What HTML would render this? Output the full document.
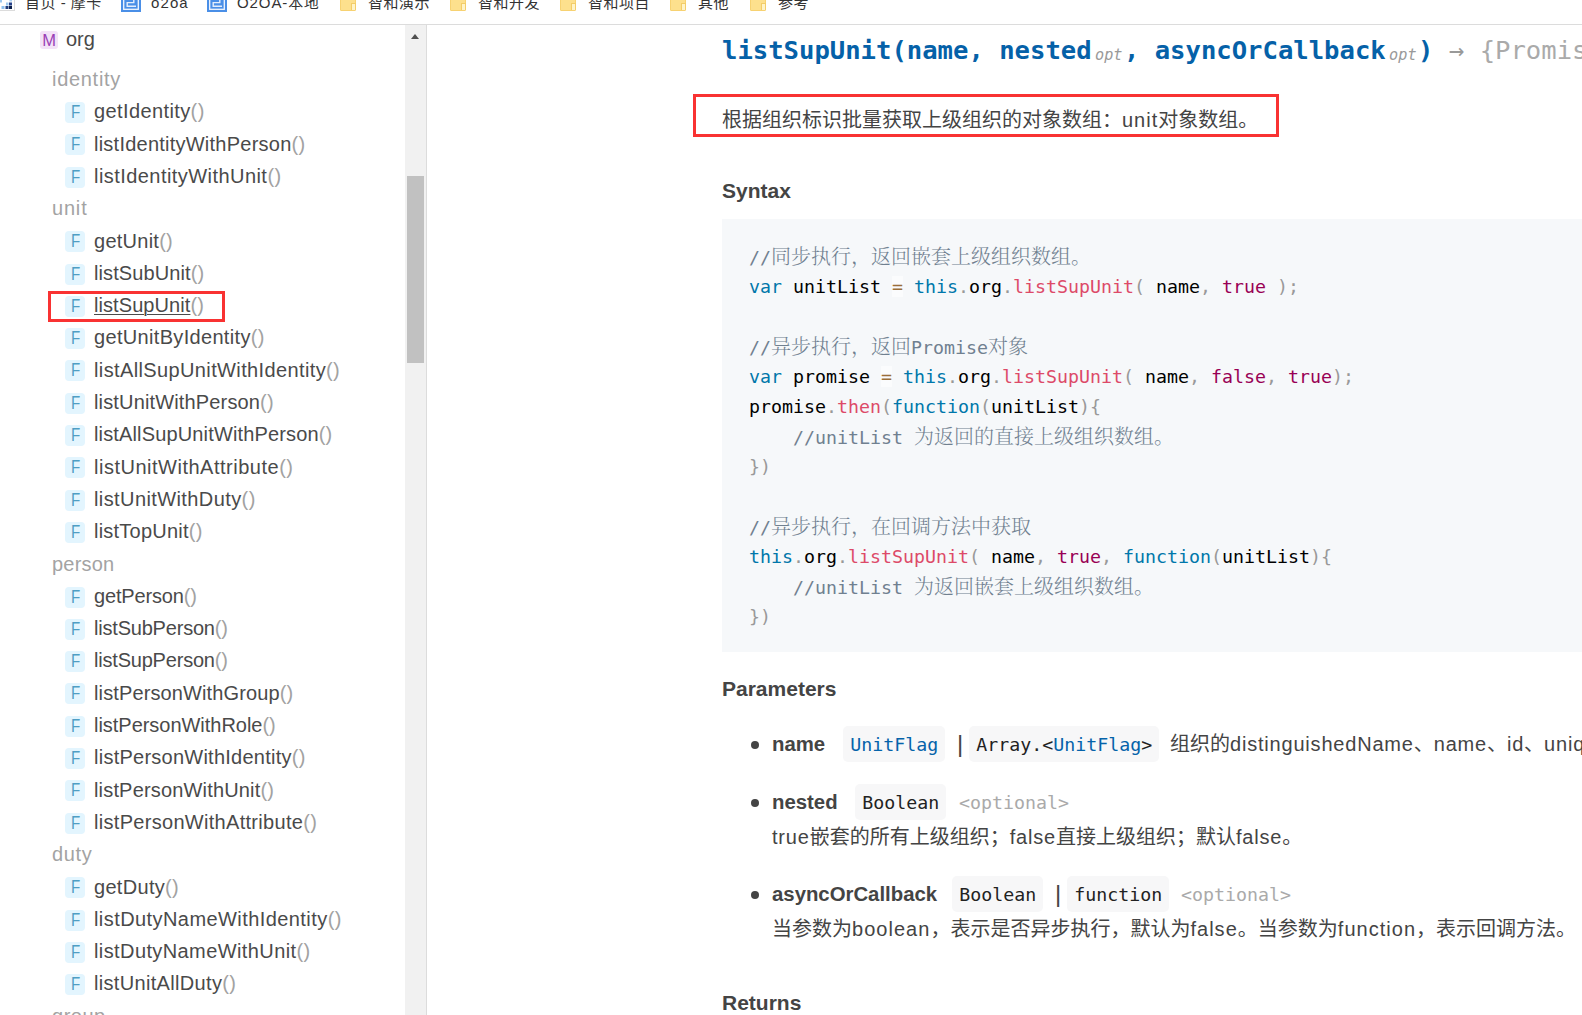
<!DOCTYPE html>
<html lang="zh-CN">
<head>
<meta charset="utf-8">
<title>org - listSupUnit</title>
<style>
*{box-sizing:border-box;margin:0;padding:0}
html,body{width:1582px;height:1015px;overflow:hidden;background:#fff}
body{position:relative;font-family:"Liberation Sans","Noto Sans CJK SC",sans-serif;font-size:20px;color:#444}
.abs{position:absolute;white-space:nowrap}
#bar{position:absolute;left:0;top:0;width:1582px;height:25px;background:#fff;border-bottom:1px solid #dcdcdc;overflow:hidden;z-index:5}
#bar .bt{position:absolute;top:-7px;letter-spacing:.5px;height:20px;line-height:20px;font-size:15px;color:#333;white-space:nowrap}
#bar .fold{position:absolute;top:-6px;width:16px;height:17px;background:#fde08d;border:1px solid #f7d272;border-radius:1px}
#bar .fold:after{content:'';position:absolute;right:-1px;bottom:0;width:3px;height:6px;background:#fff3c7;border:1px solid #f3cd69;border-bottom:none}
#bar .o2{position:absolute;top:-8px;width:20px;height:20px}
#bar .fav{position:absolute;left:0;top:-5px;width:15px;height:16px}
#side{position:absolute;left:0;top:0;width:405px;height:1015px;overflow:hidden;background:#fff}
#track{position:absolute;left:405px;top:25px;width:21px;height:990px;background:#f1f1f1}
#sline{position:absolute;left:426px;top:25px;width:1px;height:990px;background:#dcdcdc}
#thumb{position:absolute;left:407px;top:176px;width:17px;height:187px;background:#c1c1c1}
#arrow{position:absolute;left:410.6px;top:33.8px;width:0;height:0;border-left:4.8px solid transparent;border-right:4.8px solid transparent;border-bottom:5.2px solid #505050}
.row{position:absolute;left:0;height:32px;line-height:32px;white-space:nowrap;font-size:20px;color:#4a4a4a}
.row .nm{position:absolute;left:94px;top:0}
.row .pr{color:#a2a2a2}
.grp{position:absolute;left:52px;height:32px;line-height:32px;font-size:20px;color:#a3a3a3;white-space:nowrap}
.fb{position:absolute;left:65px;top:6.8px;width:20px;height:21px;border-radius:4px;background:#e3f5fe;color:#4f9ec4;font-size:18px;line-height:21px;text-align:center}
.fb b{display:inline-block;font-weight:normal;transform:scaleX(.84)}
.mb{position:absolute;left:40px;top:31px;width:18px;height:18px;border-radius:3px;background:#f3e2f7;color:#9a3fb5;font-size:16.5px;line-height:18px;text-align:center}
#selbox{position:absolute;left:48px;top:291px;width:177px;height:31px;border:3px solid #f93232}
#main{position:absolute;left:427px;top:0;width:1155px;height:1015px;overflow:hidden}
#main .abs{position:absolute;white-space:nowrap}
.mono{font-family:"DejaVu Sans Mono","Noto Serif CJK SC",monospace}
#h4{left:295px;top:33px;height:34px;line-height:34px;font-size:25.58px;font-weight:bold;color:#0561a8}
#h4 .opt{font-size:15.2px;font-style:italic;font-weight:normal;color:#999;margin:0 1.5px 0 3.4px;position:relative;top:1px}
#h4 .ret{font-weight:normal;color:#aaa}
#h4 .arr{font-weight:normal;color:#999}
#descbox{left:266px;top:94px;width:586px;height:43px;border:3px solid #f93232}
#desc{left:295px;top:102.5px;height:34px;line-height:34px;font-size:20px;color:#444}
.hd{font-weight:bold;font-size:21px;color:#444;left:295px;height:30px;line-height:30px}
#code{left:295px;top:219px;width:860px;height:433px;background:#f6f8fa}
#code .ln{position:absolute;left:27px;margin-top:0.9px;height:30px;font-family:"DejaVu Sans Mono","Noto Serif CJK SC",monospace;font-size:18.27px;line-height:30px;color:#000;white-space:pre}
#code .ln .cj{font-size:20px;line-height:30px;font-weight:300}
.c{color:#708090}.k{color:#0077aa}.f{color:#dd4a68}.b{color:#990055}.p{color:#999}.o{color:#9a6e3a;background:rgba(255,255,255,.5)}
.bul{width:8px;height:8px;border-radius:50%;background:#444;left:324.4px}
.pn{font-weight:bold;font-size:20.35px;color:#444;left:345px;height:36px;line-height:36px}
.ty{height:36px;line-height:38px;border-radius:5px;background:#f7f7f8;font-family:"DejaVu Sans Mono",monospace;font-size:18.27px;color:#222;padding:0 7.2px}
.ty .lk{color:#0563aa}
.bar{font-size:24px;color:#444;height:36px;line-height:35px}
.optn{font-family:"DejaVu Sans Mono",monospace;font-size:18.27px;color:#aaa;height:36px;line-height:38px}
.pd{left:345px;font-size:20px;color:#444;height:34px;line-height:34px}
.la{letter-spacing:.8px}

</style>
</head>
<body>
<div id="bar">
<svg class="fav" viewBox="0 0 15 16"><rect x="-1" y="-1" width="15.5" height="16.5" fill="#fff" stroke="#dcdcdc"/><rect x="1.5" y="11" width="3" height="3" fill="#8fc0ee"/><rect x="5.5" y="11" width="3" height="3" fill="#1f3b7a"/><rect x="9" y="11" width="3" height="3" fill="#0b1f4a"/><rect x="9" y="7.5" width="3" height="3" fill="#27428a"/><rect x="6" y="7.5" width="2.5" height="3" fill="#9cc8f0"/><rect x="0" y="5" width="2" height="2.5" fill="#9cc8f0"/><rect x="9.5" y="4" width="2.5" height="2.5" fill="#a9d0f3"/></svg>
<span class="bt" style="left:25px">首页 - 摩卡</span>
<svg class="o2" style="left:121px" viewBox="0 0 20 20"><rect width="20" height="20" fill="#4a8fe7"/><rect x="2.7" y="2.7" width="14.6" height="14.6" fill="none" stroke="#f1f6fe" stroke-width="1.3"/><path d="M8.5 7H12.8V10.6H6.2V14.2H15" fill="none" stroke="#e4eefc" stroke-width="1.4"/></svg>
<span class="bt" style="left:151px"><span style="letter-spacing:1.1px">o2oa</span></span>
<svg class="o2" style="left:207px" viewBox="0 0 20 20"><rect width="20" height="20" fill="#4a8fe7"/><rect x="2.7" y="2.7" width="14.6" height="14.6" fill="none" stroke="#f1f6fe" stroke-width="1.3"/><path d="M8.5 7H12.8V10.6H6.2V14.2H15" fill="none" stroke="#e4eefc" stroke-width="1.4"/></svg>
<span class="bt" style="left:237px"><span style="letter-spacing:0.9px">O2OA-</span>本地</span>
<span class="fold" style="left:340px"></span>
<span class="bt" style="left:368px">智和演示</span>
<span class="fold" style="left:450px"></span>
<span class="bt" style="left:478px">智和开发</span>
<span class="fold" style="left:560px"></span>
<span class="bt" style="left:588px">智和项目</span>
<span class="fold" style="left:670px"></span>
<span class="bt" style="left:698px">其他</span>
<span class="fold" style="left:750px"></span>
<span class="bt" style="left:778px">参考</span>
</div>
<div id="side">
<div class="mb">M</div><div class="row" style="left:66px;top:23.4px">org</div>
<div class="grp" id="r_identity" style="top:63.0px;letter-spacing:0.703px;">identity</div>
<div class="row" style="top:95.3px"><span class="fb"><b>F</b></span><span class="nm" id="r_getIdentity" style="letter-spacing:0.391px;"><span>getIdentity</span><span class="pr">()</span></span></div>
<div class="row" style="top:127.6px"><span class="fb"><b>F</b></span><span class="nm" id="r_listIdentityWithPerson" style="letter-spacing:0.236px;"><span>listIdentityWithPerson</span><span class="pr">()</span></span></div>
<div class="row" style="top:159.9px"><span class="fb"><b>F</b></span><span class="nm" id="r_listIdentityWithUnit" style="letter-spacing:0.444px;"><span>listIdentityWithUnit</span><span class="pr">()</span></span></div>
<div class="grp" id="r_unit" style="top:192.2px;letter-spacing:0.812px;">unit</div>
<div class="row" style="top:224.5px"><span class="fb"><b>F</b></span><span class="nm" id="r_getUnit" style="letter-spacing:0.255px;"><span>getUnit</span><span class="pr">()</span></span></div>
<div class="row" style="top:256.8px"><span class="fb"><b>F</b></span><span class="nm" id="r_listSubUnit" style="letter-spacing:0.098px;"><span>listSubUnit</span><span class="pr">()</span></span></div>
<div class="row" style="top:289.1px"><span class="fb"><b>F</b></span><span class="nm" id="r_listSupUnit" style="letter-spacing:0.075px;"><span style="text-decoration:underline;text-decoration-thickness:1px;text-underline-offset:2px">listSupUnit</span><span class="pr">()</span></span></div>
<div class="row" style="top:321.4px"><span class="fb"><b>F</b></span><span class="nm" id="r_getUnitByIdentity" style="letter-spacing:0.325px;"><span>getUnitByIdentity</span><span class="pr">()</span></span></div>
<div class="row" style="top:353.7px"><span class="fb"><b>F</b></span><span class="nm" id="r_listAllSupUnitWithIdentity" style="letter-spacing:0.374px;"><span>listAllSupUnitWithIdentity</span><span class="pr">()</span></span></div>
<div class="row" style="top:386.0px"><span class="fb"><b>F</b></span><span class="nm" id="r_listUnitWithPerson" style="letter-spacing:0.15px;"><span>listUnitWithPerson</span><span class="pr">()</span></span></div>
<div class="row" style="top:418.3px"><span class="fb"><b>F</b></span><span class="nm" id="r_listAllSupUnitWithPerson" style="letter-spacing:0.149px;"><span>listAllSupUnitWithPerson</span><span class="pr">()</span></span></div>
<div class="row" style="top:450.6px"><span class="fb"><b>F</b></span><span class="nm" id="r_listUnitWithAttribute" style="letter-spacing:0.508px;"><span>listUnitWithAttribute</span><span class="pr">()</span></span></div>
<div class="row" style="top:482.9px"><span class="fb"><b>F</b></span><span class="nm" id="r_listUnitWithDuty" style="letter-spacing:0.402px;"><span>listUnitWithDuty</span><span class="pr">()</span></span></div>
<div class="row" style="top:515.2px"><span class="fb"><b>F</b></span><span class="nm" id="r_listTopUnit" style="letter-spacing:0.231px;"><span>listTopUnit</span><span class="pr">()</span></span></div>
<div class="grp" id="r_person" style="top:547.5px;letter-spacing:0.206px;">person</div>
<div class="row" style="top:579.8px"><span class="fb"><b>F</b></span><span class="nm" id="r_getPerson" style="letter-spacing:-0.155px;"><span>getPerson</span><span class="pr">()</span></span></div>
<div class="row" style="top:612.1px"><span class="fb"><b>F</b></span><span class="nm" id="r_listSubPerson" style="letter-spacing:-0.202px;"><span>listSubPerson</span><span class="pr">()</span></span></div>
<div class="row" style="top:644.4px"><span class="fb"><b>F</b></span><span class="nm" id="r_listSupPerson" style="letter-spacing:-0.202px;"><span>listSupPerson</span><span class="pr">()</span></span></div>
<div class="row" style="top:676.7px"><span class="fb"><b>F</b></span><span class="nm" id="r_listPersonWithGroup" style="letter-spacing:0.122px;"><span>listPersonWithGroup</span><span class="pr">()</span></span></div>
<div class="row" style="top:709.0px"><span class="fb"><b>F</b></span><span class="nm" id="r_listPersonWithRole" style="letter-spacing:-0.029px;"><span>listPersonWithRole</span><span class="pr">()</span></span></div>
<div class="row" style="top:741.3px"><span class="fb"><b>F</b></span><span class="nm" id="r_listPersonWithIdentity" style="letter-spacing:0.249px;"><span>listPersonWithIdentity</span><span class="pr">()</span></span></div>
<div class="row" style="top:773.6px"><span class="fb"><b>F</b></span><span class="nm" id="r_listPersonWithUnit" style="letter-spacing:0.169px;"><span>listPersonWithUnit</span><span class="pr">()</span></span></div>
<div class="row" style="top:805.9px"><span class="fb"><b>F</b></span><span class="nm" id="r_listPersonWithAttribute" style="letter-spacing:0.299px;"><span>listPersonWithAttribute</span><span class="pr">()</span></span></div>
<div class="grp" id="r_duty" style="top:838.2px;letter-spacing:0.672px;">duty</div>
<div class="row" style="top:870.5px"><span class="fb"><b>F</b></span><span class="nm" id="r_getDuty" style="letter-spacing:0.304px;"><span>getDuty</span><span class="pr">()</span></span></div>
<div class="row" style="top:902.8px"><span class="fb"><b>F</b></span><span class="nm" id="r_listDutyNameWithIdentity" style="letter-spacing:0.426px;"><span>listDutyNameWithIdentity</span><span class="pr">()</span></span></div>
<div class="row" style="top:935.1px"><span class="fb"><b>F</b></span><span class="nm" id="r_listDutyNameWithUnit" style="letter-spacing:0.399px;"><span>listDutyNameWithUnit</span><span class="pr">()</span></span></div>
<div class="row" style="top:967.4px"><span class="fb"><b>F</b></span><span class="nm" id="r_listUnitAllDuty" style="letter-spacing:0.324px;"><span>listUnitAllDuty</span><span class="pr">()</span></span></div>
<div class="grp" id="r_group" style="top:999.7px;letter-spacing:0.508px;">group</div>
<div id="selbox"></div>
</div>
<div id="track"></div><div id="sline"></div><div id="thumb"></div><div id="arrow"></div>
<div id="main">
<div class="abs mono" id="h4">listSupUnit(name, nested<span class="opt">opt</span>, asyncOrCallback<span class="opt">opt</span>)<span class="arr"> → </span><span class="ret">{Promise|Array}</span></div>
<div class="abs" id="descbox"></div>
<div class="abs" id="desc">根据组织标识批量获取上级组织的对象数组：<span class="la" style="letter-spacing:1px">unit</span>对象数组。</div>
<div class="abs hd" style="top:176px">Syntax</div>
<div class="abs" id="code">
<div class="ln" style="top:22px"><span class="c">//<span class="cj">同步执行，返回嵌套上级组织数组。</span></span></div>
<div class="ln" style="top:52px"><span class="k">var</span> unitList <span class="o">=</span> <span class="k">this</span><span class="p">.</span>org<span class="p">.</span><span class="f">listSupUnit</span><span class="p">(</span> name<span class="p">,</span> <span class="b">true</span> <span class="p">);</span></div>
<div class="ln" style="top:82px"></div>
<div class="ln" style="top:112px"><span class="c">//<span class="cj">异步执行，返回</span>Promise<span class="cj">对象</span></span></div>
<div class="ln" style="top:142px"><span class="k">var</span> promise <span class="o">=</span> <span class="k">this</span><span class="p">.</span>org<span class="p">.</span><span class="f">listSupUnit</span><span class="p">(</span> name<span class="p">,</span> <span class="b">false</span><span class="p">,</span> <span class="b">true</span><span class="p">);</span></div>
<div class="ln" style="top:172px">promise<span class="p">.</span><span class="f">then</span><span class="p">(</span><span class="k">function</span><span class="p">(</span>unitList<span class="p">){</span></div>
<div class="ln" style="top:202px">    <span class="c">//unitList <span class="cj">为返回的直接上级组织数组。</span></span></div>
<div class="ln" style="top:232px"><span class="p">})</span></div>
<div class="ln" style="top:262px"></div>
<div class="ln" style="top:292px"><span class="c">//<span class="cj">异步执行，在回调方法中获取</span></span></div>
<div class="ln" style="top:322px"><span class="k">this</span><span class="p">.</span>org<span class="p">.</span><span class="f">listSupUnit</span><span class="p">(</span> name<span class="p">,</span> <span class="b">true</span><span class="p">,</span> <span class="k">function</span><span class="p">(</span>unitList<span class="p">){</span></div>
<div class="ln" style="top:352px">    <span class="c">//unitList <span class="cj">为返回嵌套上级组织数组。</span></span></div>
<div class="ln" style="top:382px"><span class="p">})</span></div>
</div>
<div class="abs hd" style="top:674px">Parameters</div>
<div class="abs bul" style="top:741px"></div>
<div class="abs pn" style="top:726px">name</div>
<div class="abs ty" style="left:416px;top:726px"><span class="lk">UnitFlag</span></div>
<div class="abs bar" style="left:530px;top:726px">|</div>
<div class="abs ty" style="left:542px;top:726px">Array.&lt;<span class="lk">UnitFlag</span>&gt;</div>
<div class="abs pd" style="left:743px;top:727px">组织的<span class="la">distinguishedName</span>、<span class="la">name</span>、<span class="la">id</span>、<span class="la">unique</span>属性值，组织对象，或上述属性值和对象的数组。</div>
<div class="abs bul" style="top:798.5px"></div>
<div class="abs pn" style="top:784px">nested</div>
<div class="abs ty" style="left:428px;top:784px">Boolean</div>
<div class="abs optn" style="left:532px;top:784px">&lt;optional&gt;</div>
<div class="abs pd" style="top:820px"><span class="la">true</span>嵌套的所有上级组织；<span class="la">false</span>直接上级组织；默认<span class="la">false</span>。</div>
<div class="abs bul" style="top:891px"></div>
<div class="abs pn" style="top:876px">asyncOrCallback</div>
<div class="abs ty" style="left:525px;top:876px">Boolean</div>
<div class="abs bar" style="left:628px;top:876px">|</div>
<div class="abs ty" style="left:640px;top:876px">function</div>
<div class="abs optn" style="left:754px;top:876px">&lt;optional&gt;</div>
<div class="abs pd" style="top:912px">当参数为<span class="la" style="letter-spacing:1.03px">boolean</span>，表示是否异步执行，默认为<span class="la" style="letter-spacing:1.03px">false</span>。当参数为<span class="la" style="letter-spacing:1.03px">function</span>，表示回调方法。</div>
<div class="abs hd" style="top:987.5px">Returns</div>

</div>
</body>
</html>
